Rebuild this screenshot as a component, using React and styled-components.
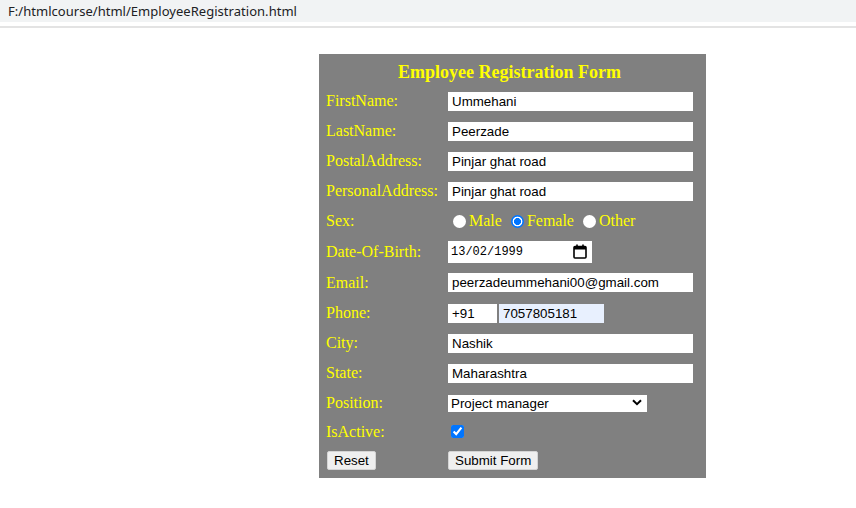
import React from "react";
import styled, { createGlobalStyle } from "styled-components";

const Global = createGlobalStyle`
  html, body { margin: 0; padding: 0; background: #fff; }
  #root { width: 856px; min-height: 508px; }
`;

const AddressBar = styled.div`
  height: 22px;
  background: #f1f3f4;
  padding-left: 8px;
  display: flex;
  align-items: center;
  font-family: "Noto Sans", "Open Sans", sans-serif;
  font-size: 13px;
  color: #202124;
  letter-spacing: 0.03px;
`;

const Divider = styled.div`
  margin-top: 4px;
  height: 2px;
  background: #e3e3e3;
`;

const Page = styled.main`
  padding: 26px 0 0 319px;
`;

const Panel = styled.form`
  width: 367px;
  background: #808080;
  padding: 0 13px 3px 7px;
  color: #ffff00;
  font-family: "Liberation Serif", "Times New Roman", serif;
  font-size: 16px;
`;

const Title = styled.h1`
  margin: 0;
  height: 32px;
  padding-top: 4px;
  box-sizing: border-box;
  display: flex;
  align-items: center;
  justify-content: center;
  font-size: 18px;
  font-weight: bold;
  color: #ffff00;
`;

const Row = styled.div`
  display: flex;
  align-items: center;
  height: ${(p) => p.$h || 30}px;
`;

const Label = styled.label`
  width: 122px;
  flex: none;
  white-space: nowrap;
`;

const Field = styled.div`
  display: flex;
  align-items: center;
  flex: 1;
`;

const TextInput = styled.input`
  box-sizing: border-box;
  width: ${(p) => p.$w || 245}px;
  height: 19px;
  border: none;
  outline: none;
  margin: 0;
  padding: 0 4px;
  background: ${(p) => (p.$autofill ? "#e8f0fe" : "#fff")};
  font-family: "Liberation Sans", Arial, sans-serif;
  font-size: 13.33px;
  color: #000;
`;

const PhoneGroup = styled.div`
  display: flex;
  gap: 2px;
`;

const RadioLabel = styled.label`
  display: inline-flex;
  align-items: center;
  margin-right: 4px;
  color: #ffff00;
`;

const Radio = styled.input.attrs({ type: "radio" })`
  appearance: none;
  width: 13px;
  height: 13px;
  margin: 0 3px 0 5px;
  border-radius: 50%;
  background: #fff;
  border: none;
  &:checked {
    background: radial-gradient(circle, #0075ff 0 3.2px, #fff 3.8px 4.6px, #0075ff 5.2px);
  }
`;

const DateBox = styled.div`
  box-sizing: border-box;
  width: 144px;
  height: 22px;
  background: #fff;
  display: flex;
  align-items: center;
  justify-content: space-between;
  padding: 0 5px 0 3px;
  font-family: "Liberation Mono", "DejaVu Sans Mono", monospace;
  font-size: 12px;
  color: #000;
`;

const SelectWrap = styled.div`
  position: relative;
  width: 199px;
  height: 17px;
`;

const Select = styled.select`
  appearance: none;
  width: 100%;
  height: 100%;
  border: none;
  outline: none;
  margin: 0;
  padding: 0 0 0 3px;
  background: #fff;
  font-family: "Liberation Sans", Arial, sans-serif;
  font-size: 13.33px;
  color: #000;
`;

const Chevron = styled.svg`
  position: absolute;
  right: 5px;
  top: 5px;
  pointer-events: none;
`;

const Check = styled.input.attrs({ type: "checkbox" })`
  width: 13px;
  height: 13px;
  margin: 0 0 0 3px;
  accent-color: #0075ff;
`;

const Button = styled.button`
  height: 19px;
  margin: 0 0 0 ${(p) => p.$ml || 0}px;
  padding: 0 6px;
  border: 1px solid #d4d4d4;
  border-radius: 2px;
  background: #efefef;
  font-family: "Liberation Sans", Arial, sans-serif;
  font-size: 13.33px;
  color: #000;
`;

const CalendarIcon = () => (
  <svg width="14" height="15" viewBox="0 0 14 15">
    <rect x="1" y="2.5" width="12" height="11.5" rx="1" fill="none" stroke="#000" strokeWidth="1.6" />
    <rect x="1" y="2.5" width="12" height="3" fill="#000" />
    <rect x="3.2" y="0.5" width="1.6" height="3" fill="#000" />
    <rect x="9.2" y="0.5" width="1.6" height="3" fill="#000" />
  </svg>
);

export default function App() {
  return (
    <>
      <Global />
      <AddressBar>F:/htmlcourse/html/EmployeeRegistration.html</AddressBar>
      <Divider />
      <Page>
        <Panel onSubmit={(e) => e.preventDefault()}>
          <Title>Employee Registration Form</Title>
          <Row>
            <Label>FirstName:</Label>
            <Field><TextInput defaultValue="Ummehani" /></Field>
          </Row>
          <Row>
            <Label>LastName:</Label>
            <Field><TextInput defaultValue="Peerzade" /></Field>
          </Row>
          <Row>
            <Label>PostalAddress:</Label>
            <Field><TextInput defaultValue="Pinjar ghat road" /></Field>
          </Row>
          <Row>
            <Label>PersonalAddress:</Label>
            <Field><TextInput defaultValue="Pinjar ghat road" /></Field>
          </Row>
          <Row>
            <Label>Sex:</Label>
            <Field>
              <RadioLabel><Radio name="sex" />Male</RadioLabel>
              <RadioLabel><Radio name="sex" defaultChecked />Female</RadioLabel>
              <RadioLabel><Radio name="sex" />Other</RadioLabel>
            </Field>
          </Row>
          <Row $h={31}>
            <Label>Date-Of-Birth:</Label>
            <Field>
              <DateBox>
                <span>13/02/1999</span>
                <CalendarIcon />
              </DateBox>
            </Field>
          </Row>
          <Row $h={31}>
            <Label>Email:</Label>
            <Field><TextInput defaultValue="peerzadeummehani00@gmail.com" /></Field>
          </Row>
          <Row>
            <Label>Phone:</Label>
            <Field>
              <PhoneGroup>
                <TextInput $w={49} defaultValue="+91" />
                <TextInput $w={105} $autofill defaultValue="7057805181" />
              </PhoneGroup>
            </Field>
          </Row>
          <Row>
            <Label>City:</Label>
            <Field><TextInput defaultValue="Nashik" /></Field>
          </Row>
          <Row>
            <Label>State:</Label>
            <Field><TextInput defaultValue="Maharashtra" /></Field>
          </Row>
          <Row $h={29}>
            <Label>Position:</Label>
            <Field>
              <SelectWrap>
                <Select defaultValue="Project manager">
                  <option>Project manager</option>
                  <option>Developer</option>
                  <option>Tester</option>
                </Select>
                <Chevron width="10" height="7" viewBox="0 0 10 7">
                  <path d="M1 1.2 L5 5.2 L9 1.2" fill="none" stroke="#000" strokeWidth="2" />
                </Chevron>
              </SelectWrap>
            </Field>
          </Row>
          <Row $h={29}>
            <Label>IsActive:</Label>
            <Field><Check defaultChecked /></Field>
          </Row>
          <Row $h={29}>
            <Label><Button type="reset" $ml={1}>Reset</Button></Label>
            <Field><Button type="submit">Submit Form</Button></Field>
          </Row>
        </Panel>
      </Page>
    </>
  );
}
